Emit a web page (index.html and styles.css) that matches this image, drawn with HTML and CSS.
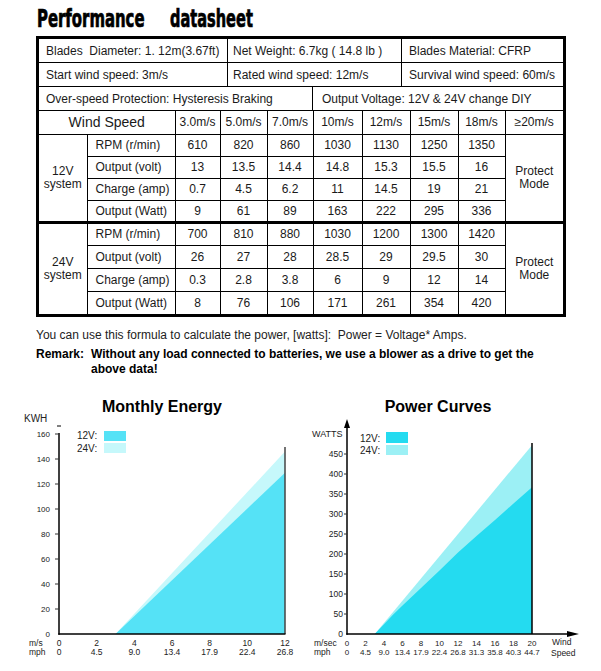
FILE: index.html
```html
<!DOCTYPE html>
<html>
<head>
<meta charset="utf-8">
<title>Performance datasheet</title>
<link rel="stylesheet" href="styles.css">
</head>
<body>
<div class="top">
  <h1 class="title"><span class="tw tw-1"><span class="tw-in tw-in-1">Performance</span></span><span class="tw tw-2"><span class="tw-in tw-in-2">datasheet</span></span></h1>
  <div class="sheet">
    <div class="spec-row">
      <div class="spec w1">Blades&nbsp; Diameter: 1. 12m(3.67ft)</div>
      <div class="spec w2">Net Weight: 6.7kg ( 14.8 lb )</div>
      <div class="spec w3">Blades Material: CFRP</div>
    </div>
    <div class="spec-row">
      <div class="spec w1">Start wind speed: 3m/s</div>
      <div class="spec w2">Rated wind speed: 12m/s</div>
      <div class="spec w3">Survival wind speed: 60m/s</div>
    </div>
    <div class="spec-row">
      <div class="spec w4">Over-speed Protection: Hysteresis Braking</div>
      <div class="spec w5">Output Voltage: 12V &amp; 24V change DIY</div>
    </div>
    <table class="perf">
      <colgroup>
        <col class="c-sys"><col class="c-lbl"><col class="c-45"><col class="c-47"><col class="c-46"><col class="c-49"><col class="c-48"><col class="c-48"><col class="c-47"><col class="c-58">
      </colgroup>
      <tr class="head">
        <th colspan="2" class="ws">Wind Speed</th>
        <td>3.0m/s</td><td>5.0m/s</td><td>7.0m/s</td><td>10m/s</td><td>12m/s</td><td>15m/s</td><td>18m/s</td><td>≥20m/s</td>
      </tr>
      <tr>
        <td rowspan="4" class="sys">12V<br>system</td>
        <td class="lbl">RPM (r/min)</td>
        <td>610</td><td>820</td><td>860</td><td>1030</td><td>1130</td><td>1250</td><td>1350</td>
        <td rowspan="4" class="protect">Protect<br>Mode</td>
      </tr>
      <tr><td class="lbl">Output (volt)</td><td>13</td><td>13.5</td><td>14.4</td><td>14.8</td><td>15.3</td><td>15.5</td><td>16</td></tr>
      <tr><td class="lbl">Charge (amp)</td><td>0.7</td><td>4.5</td><td>6.2</td><td>11</td><td>14.5</td><td>19</td><td>21</td></tr>
      <tr><td class="lbl">Output (Watt)</td><td>9</td><td>61</td><td>89</td><td>163</td><td>222</td><td>295</td><td>336</td></tr>
      <tr class="g2 r24">
        <td rowspan="4" class="sys">24V<br>system</td>
        <td class="lbl">RPM (r/min)</td>
        <td>700</td><td>810</td><td>880</td><td>1030</td><td>1200</td><td>1300</td><td>1420</td>
        <td rowspan="4" class="protect">Protect<br>Mode</td>
      </tr>
      <tr class="r24"><td class="lbl">Output (volt)</td><td>26</td><td>27</td><td>28</td><td>28.5</td><td>29</td><td>29.5</td><td>30</td></tr>
      <tr class="r24"><td class="lbl">Charge (amp)</td><td>0.3</td><td>2.8</td><td>3.8</td><td>6</td><td>9</td><td>12</td><td>14</td></tr>
      <tr class="r24"><td class="lbl">Output (Watt)</td><td>8</td><td>76</td><td>106</td><td>171</td><td>261</td><td>354</td><td>420</td></tr>
    </table>
  </div>
  <div class="notes">
    <p class="formula">You can use this formula to calculate the power, [watts]:&nbsp; Power = Voltage* Amps.</p>
    <div class="remark">
      <span class="remark-label">Remark:</span>
      <span class="remark-text">Without any load connected to batteries, we use a blower as a drive to get the above data!</span>
    </div>
  </div>
</div>

<div class="charts">
  <svg class="chart" width="300" height="281" viewBox="0 0 300 281">
    <text x="162" y="22" class="ttl" text-anchor="middle">Monthly Energy</text>
    <text x="24" y="32" class="unit">KWH</text>
    <polygon points="115.5,244 285,61.5 285,244" class="e24"/>
    <polygon points="115.5,244 285,82.75 285,244" class="e12"/>
    <line x1="285" y1="57" x2="285" y2="244" class="vline-gray"/>
    <line x1="57" y1="36" x2="61" y2="36" class="axis-thin"/>
    <line x1="59" y1="43" x2="59" y2="244.7" class="axis"/>
    <line x1="58.3" y1="244" x2="285.5" y2="244" class="axis"/>
    <g class="ticks">
      <line x1="55" y1="44" x2="59" y2="44"/>
      <line x1="55" y1="69" x2="59" y2="69"/>
      <line x1="55" y1="94" x2="59" y2="94"/>
      <line x1="55" y1="119" x2="59" y2="119"/>
      <line x1="55" y1="144" x2="59" y2="144"/>
      <line x1="55" y1="169" x2="59" y2="169"/>
      <line x1="55" y1="194" x2="59" y2="194"/>
      <line x1="55" y1="219" x2="59" y2="219"/>
    </g>
    <g class="ylab" text-anchor="end">
      <text x="50" y="47">160</text>
      <text x="50" y="72">140</text>
      <text x="50" y="97">120</text>
      <text x="50" y="122">100</text>
      <text x="50" y="147">80</text>
      <text x="50" y="172">60</text>
      <text x="50" y="197">40</text>
      <text x="50" y="222">20</text>
      <text x="50" y="247">0</text>
    </g>
    <g class="xlab">
      <text x="29" y="256">m/s</text>
      <text x="29" y="265">mph</text>
    </g>
    <g class="xlab" text-anchor="middle">
      <text x="59" y="256">0</text><text x="59" y="265">0</text>
      <text x="96.7" y="256">2</text><text x="96.7" y="265">4.5</text>
      <text x="134.3" y="256">4</text><text x="134.3" y="265">9.0</text>
      <text x="172" y="256">6</text><text x="172" y="265">13.4</text>
      <text x="209.6" y="256">8</text><text x="209.6" y="265">17.9</text>
      <text x="247.3" y="256">10</text><text x="247.3" y="265">22.4</text>
      <text x="285" y="256">12</text><text x="285" y="265">26.8</text>
    </g>
    <text x="77" y="49" class="leg">12V:</text>
    <rect x="104" y="41" width="22" height="10" class="e12"/>
    <text x="77" y="62" class="leg">24V:</text>
    <rect x="104" y="53" width="22" height="10" class="e24"/>
  </svg>

  <svg class="chart" width="301" height="281" viewBox="0 0 301 281">
    <text x="138" y="22" class="ttl" text-anchor="middle">Power Curves</text>
    <text x="12" y="46.5" class="unit-s">WATTS</text>
    <polygon points="74.75,244 232,55.2 232,244" class="p24"/>
    <polygon points="74.75,244 93.25,224.5 102.5,215.5 121,198 139.5,180.5 158,162.5 176.5,146 195,130 213.5,113.5 232,97.2 232,244" class="p12"/>
    <line x1="232" y1="53" x2="232" y2="244" class="vline"/>
    <line x1="47" y1="244.7" x2="47" y2="37" class="axis"/>
    <polygon points="47,29 44,38 50,38" class="arrow"/>
    <line x1="46.3" y1="244" x2="268" y2="244" class="axis"/>
    <polygon points="279,244 267,241 267,247" class="arrow"/>
    <g class="ticks">
      <line x1="44" y1="64" x2="47" y2="64"/>
      <line x1="44" y1="84" x2="47" y2="84"/>
      <line x1="44" y1="104" x2="47" y2="104"/>
      <line x1="44" y1="124" x2="47" y2="124"/>
      <line x1="44" y1="144" x2="47" y2="144"/>
      <line x1="44" y1="164" x2="47" y2="164"/>
      <line x1="44" y1="184" x2="47" y2="184"/>
      <line x1="44" y1="204" x2="47" y2="204"/>
      <line x1="44" y1="224" x2="47" y2="224"/>
    </g>
    <g class="ylab2" text-anchor="end">
      <text x="43" y="67">450</text>
      <text x="43" y="87">400</text>
      <text x="43" y="107">350</text>
      <text x="43" y="127">300</text>
      <text x="43" y="147">250</text>
      <text x="43" y="167">200</text>
      <text x="43" y="187">150</text>
      <text x="43" y="207">100</text>
      <text x="43" y="227">50</text>
      <text x="43" y="247">0</text>
    </g>
    <g class="xlab">
      <text x="14" y="256">m/sec</text>
      <text x="14" y="265">mph</text>
      <text x="252" y="255">Wind</text>
      <text x="251" y="266">Speed</text>
    </g>
    <g class="xlab2" text-anchor="middle">
      <text x="47" y="256">0</text><text x="47" y="265">0</text>
      <text x="65.5" y="256">2</text><text x="65.5" y="265">4.5</text>
      <text x="84" y="256">4</text><text x="84" y="265">9.0</text>
      <text x="102.5" y="256">6</text><text x="102.5" y="265">13.4</text>
      <text x="121" y="256">8</text><text x="121" y="265">17.9</text>
      <text x="139.5" y="256">10</text><text x="139.5" y="265">22.4</text>
      <text x="158" y="256">12</text><text x="158" y="265">26.8</text>
      <text x="176.5" y="256">14</text><text x="176.5" y="265">31.3</text>
      <text x="195" y="256">16</text><text x="195" y="265">35.8</text>
      <text x="213.5" y="256">18</text><text x="213.5" y="265">40.3</text>
      <text x="232" y="256">20</text><text x="232" y="265">44.7</text>
    </g>
    <text x="60" y="52" class="leg">12V:</text>
    <rect x="86" y="42" width="22" height="11" class="p12"/>
    <text x="60" y="64" class="leg">24V:</text>
    <rect x="86" y="55" width="22" height="10" class="p24"/>
  </svg>
</div>
</body>
</html>
```

FILE: styles.css
```css
* { box-sizing: border-box; }
html, body { margin: 0; padding: 0; background: #fff; }
body {
  width: 601px;
  height: 671px;
  overflow: hidden;
  font-family: "Liberation Sans", Arial, sans-serif;
  color: #1a1a1a;
}

.top { padding: 7px 0 0 36px; }

.title {
  display: flex;
  gap: 25px;
  margin: 0;
  padding-left: 1px;
  height: 24px;
  line-height: 24px;
  font-family: "DejaVu Sans Condensed", "DejaVu Sans", sans-serif;
  font-stretch: condensed;
  font-weight: bold;
  font-size: 24px;
  color: #000;
  white-space: nowrap;
  -webkit-text-stroke: 0.7px #000;
}
.tw { display: block; flex: none; }
.tw-1 { width: 108px; }
.tw-2 { width: 84px; }
.tw-in {
  display: inline-block;
  transform-origin: 0 50%;
}
.tw-in-1 { transform: scaleX(0.69); }
.tw-in-2 { transform: scaleX(0.675); }

.sheet {
  margin-top: 5px;
  width: 530px;
  border: 3px solid #000;
  font-size: 12px;
}

.spec-row {
  display: flex;
  height: 24px;
  border-bottom: 1px solid #000;
}
.spec {
  display: flex;
  align-items: center;
  white-space: nowrap;
  border-right: 1px solid #000;
}
.spec:last-child { border-right: none; }
.w1 { width: 189px; padding-left: 7px; }
.w2 { width: 174px; padding-left: 5px; }
.w3 { flex: 1; padding-left: 7px; }
.w4 { width: 274px; padding-left: 7px; }
.w5 { flex: 1; padding-left: 9px; }

.perf {
  width: 524px;
  border-collapse: collapse;
  border-style: hidden;
  table-layout: fixed;
  font-size: 12px;
}
.c-sys { width: 48px; }
.c-lbl { width: 88px; }
.c-45 { width: 45px; }
.c-46 { width: 46px; }
.c-47 { width: 47px; }
.c-48 { width: 48px; }
.c-49 { width: 49px; }
.c-58 { width: 58px; }

.perf td, .perf th {
  border: 1px solid #000;
  padding: 0;
  height: 22px;
  line-height: 14px;
  text-align: center;
  vertical-align: middle;
  font-weight: normal;
  white-space: nowrap;
}
.perf .head td, .perf .head th { height: 23px; }
.perf tr.r24 td { height: 23px; }
.perf th.ws { font-size: 14px; }
.perf td.lbl { text-align: left; padding-left: 8px; }
.perf tr.g2 td { border-top: 3px solid #000; }
.perf td.sys { line-height: 13px; }
.perf td.protect { line-height: 13px; }

.notes {
  width: 520px;
  margin-top: 11px;
  font-size: 12px;
  line-height: 15px;
}
.formula { margin: 0; color: #222; }
.remark {
  display: flex;
  margin-top: 4px;
  font-weight: bold;
  color: #000;
}
.remark-label { flex: none; width: 55px; }
.remark-text { flex: 1; }

.charts {
  display: flex;
  margin-top: 13px;
  height: 281px;
}
.chart { display: block; flex: none; }
.chart text { font-family: "Liberation Sans", Arial, sans-serif; fill: #222; }
.chart .ttl { font-size: 16px; font-weight: bold; fill: #000; }
.chart .unit { font-size: 10px; }
.chart .unit-s { font-size: 9px; }
.chart .leg { font-size: 10px; }
.ylab text { font-size: 8px; }
.ylab2 text { font-size: 8.5px; }
.xlab text { font-size: 8.5px; }
.xlab2 text { font-size: 8px; }

.e12 { fill: #55e2f6; }
.e24 { fill: #c6f8fb; }
.p12 { fill: #24dbf0; }
.p24 { fill: #9cf0f5; }

.axis { stroke: #000; stroke-width: 1.5; }
.axis-thin { stroke: #000; stroke-width: 1; }
.arrow { fill: #000; }
.vline { stroke: #000; stroke-width: 1.5; }
.vline-gray { stroke: #444; stroke-width: 1.5; }
.ticks line { stroke: #333; stroke-width: 1; }
```
